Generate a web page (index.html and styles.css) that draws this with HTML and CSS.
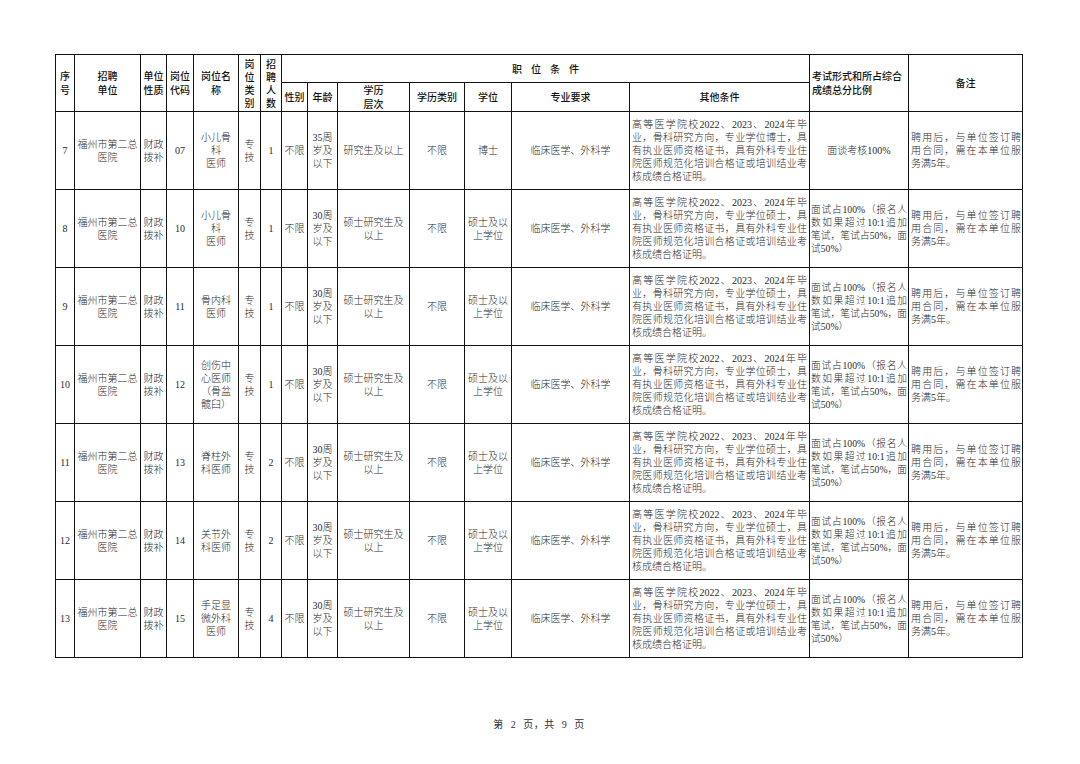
FILE: index.html
```html
<!DOCTYPE html>
<html lang="zh-CN">
<head>
<meta charset="utf-8">
<title>岗位表</title>
<link rel="stylesheet" href="styles.css">
</head>
<body>
<div class="page">
<table class="grid">
<colgroup>
<col style="width:19px"><col style="width:66px"><col style="width:26px"><col style="width:27px"><col style="width:45px"><col style="width:22px"><col style="width:21px"><col style="width:26px"><col style="width:30px"><col style="width:72px"><col style="width:55px"><col style="width:47px"><col style="width:118px"><col style="width:180px"><col style="width:99px"><col style="width:114px">
</colgroup>
<thead>
<tr class="hr1">
<th rowspan="2">序<br>号</th>
<th rowspan="2">招聘<br>单位</th>
<th rowspan="2">单位<br>性质</th>
<th rowspan="2">岗位<br>代码</th>
<th rowspan="2">岗位名<br>称</th>
<th rowspan="2" class="tight">岗<br>位<br>类<br>别</th>
<th rowspan="2" class="tight">招<br>聘<br>人<br>数</th>
<th colspan="7" class="spaced">职位条件</th>
<th rowspan="2" class="left">考试形式和所占综合<br>成绩总分比例</th>
<th rowspan="2">备注</th>
</tr>
<tr class="hr2">
<th>性别</th>
<th>年龄</th>
<th>学历<br>层次</th>
<th>学历类别</th>
<th>学位</th>
<th>专业要求</th>
<th>其他条件</th>
</tr>
</thead>
<tbody>
<tr>
<td>7</td><td>福州市第二总<br>医院</td><td>财政<br>拨补</td><td>07</td><td>小儿骨<br>科<br>医师</td><td>专<br>技</td><td>1</td><td>不限</td><td>35周<br>岁及<br>以下</td><td>研究生及以上</td><td>不限</td><td>博士</td><td>临床医学、外科学</td>
<td class="just other"><span>高等医学院校2022、2023、2024年毕</span><span>业，骨科研究方向，专业学位博士，具</span><span>有执业医师资格证书，具有外科专业住</span><span>院医师规范化培训合格证或培训结业考</span><span class="last">核成绩合格证明。</span></td>
<td>面谈考核100%</td>
<td class="just note"><span>聘用后，与单位签订聘</span><span>用合同，需在本单位服</span><span class="last">务满5年。</span></td>
</tr>
<tr>
<td>8</td><td>福州市第二总<br>医院</td><td>财政<br>拨补</td><td>10</td><td>小儿骨<br>科<br>医师</td><td>专<br>技</td><td>1</td><td>不限</td><td>30周<br>岁及<br>以下</td><td>硕士研究生及<br>以上</td><td>不限</td><td>硕士及以<br>上学位</td><td>临床医学、外科学</td>
<td class="just other"><span>高等医学院校2022、2023、2024年毕</span><span>业，骨科研究方向，专业学位硕士，具</span><span>有执业医师资格证书，具有外科专业住</span><span>院医师规范化培训合格证或培训结业考</span><span class="last">核成绩合格证明。</span></td>
<td class="just exam"><span>面试占100%（报名人</span><span>数如果超过10:1追加</span><span>笔试，笔试占50%，面</span><span class="last">试50%）</span></td>
<td class="just note"><span>聘用后，与单位签订聘</span><span>用合同，需在本单位服</span><span class="last">务满5年。</span></td>
</tr>
<tr>
<td>9</td><td>福州市第二总<br>医院</td><td>财政<br>拨补</td><td>11</td><td>骨内科<br>医师</td><td>专<br>技</td><td>1</td><td>不限</td><td>30周<br>岁及<br>以下</td><td>硕士研究生及<br>以上</td><td>不限</td><td>硕士及以<br>上学位</td><td>临床医学、外科学</td>
<td class="just other"><span>高等医学院校2022、2023、2024年毕</span><span>业，骨科研究方向，专业学位硕士，具</span><span>有执业医师资格证书，具有外科专业住</span><span>院医师规范化培训合格证或培训结业考</span><span class="last">核成绩合格证明。</span></td>
<td class="just exam"><span>面试占100%（报名人</span><span>数如果超过10:1追加</span><span>笔试，笔试占50%，面</span><span class="last">试50%）</span></td>
<td class="just note"><span>聘用后，与单位签订聘</span><span>用合同，需在本单位服</span><span class="last">务满5年。</span></td>
</tr>
<tr>
<td>10</td><td>福州市第二总<br>医院</td><td>财政<br>拨补</td><td>12</td><td>创伤中<br>心医师<br>（骨盆<br>髋臼）</td><td>专<br>技</td><td>1</td><td>不限</td><td>30周<br>岁及<br>以下</td><td>硕士研究生及<br>以上</td><td>不限</td><td>硕士及以<br>上学位</td><td>临床医学、外科学</td>
<td class="just other"><span>高等医学院校2022、2023、2024年毕</span><span>业，骨科研究方向，专业学位硕士，具</span><span>有执业医师资格证书，具有外科专业住</span><span>院医师规范化培训合格证或培训结业考</span><span class="last">核成绩合格证明。</span></td>
<td class="just exam"><span>面试占100%（报名人</span><span>数如果超过10:1追加</span><span>笔试，笔试占50%，面</span><span class="last">试50%）</span></td>
<td class="just note"><span>聘用后，与单位签订聘</span><span>用合同，需在本单位服</span><span class="last">务满5年。</span></td>
</tr>
<tr>
<td>11</td><td>福州市第二总<br>医院</td><td>财政<br>拨补</td><td>13</td><td>脊柱外<br>科医师</td><td>专<br>技</td><td>2</td><td>不限</td><td>30周<br>岁及<br>以下</td><td>硕士研究生及<br>以上</td><td>不限</td><td>硕士及以<br>上学位</td><td>临床医学、外科学</td>
<td class="just other"><span>高等医学院校2022、2023、2024年毕</span><span>业，骨科研究方向，专业学位硕士，具</span><span>有执业医师资格证书，具有外科专业住</span><span>院医师规范化培训合格证或培训结业考</span><span class="last">核成绩合格证明。</span></td>
<td class="just exam"><span>面试占100%（报名人</span><span>数如果超过10:1追加</span><span>笔试，笔试占50%，面</span><span class="last">试50%）</span></td>
<td class="just note"><span>聘用后，与单位签订聘</span><span>用合同，需在本单位服</span><span class="last">务满5年。</span></td>
</tr>
<tr>
<td>12</td><td>福州市第二总<br>医院</td><td>财政<br>拨补</td><td>14</td><td>关节外<br>科医师</td><td>专<br>技</td><td>2</td><td>不限</td><td>30周<br>岁及<br>以下</td><td>硕士研究生及<br>以上</td><td>不限</td><td>硕士及以<br>上学位</td><td>临床医学、外科学</td>
<td class="just other"><span>高等医学院校2022、2023、2024年毕</span><span>业，骨科研究方向，专业学位硕士，具</span><span>有执业医师资格证书，具有外科专业住</span><span>院医师规范化培训合格证或培训结业考</span><span class="last">核成绩合格证明。</span></td>
<td class="just exam"><span>面试占100%（报名人</span><span>数如果超过10:1追加</span><span>笔试，笔试占50%，面</span><span class="last">试50%）</span></td>
<td class="just note"><span>聘用后，与单位签订聘</span><span>用合同，需在本单位服</span><span class="last">务满5年。</span></td>
</tr>
<tr>
<td>13</td><td>福州市第二总<br>医院</td><td>财政<br>拨补</td><td>15</td><td>手足显<br>微外科<br>医师</td><td>专<br>技</td><td>4</td><td>不限</td><td>30周<br>岁及<br>以下</td><td>硕士研究生及<br>以上</td><td>不限</td><td>硕士及以<br>上学位</td><td>临床医学、外科学</td>
<td class="just other"><span>高等医学院校2022、2023、2024年毕</span><span>业，骨科研究方向，专业学位硕士，具</span><span>有执业医师资格证书，具有外科专业住</span><span>院医师规范化培训合格证或培训结业考</span><span class="last">核成绩合格证明。</span></td>
<td class="just exam"><span>面试占100%（报名人</span><span>数如果超过10:1追加</span><span>笔试，笔试占50%，面</span><span class="last">试50%）</span></td>
<td class="just note"><span>聘用后，与单位签订聘</span><span>用合同，需在本单位服</span><span class="last">务满5年。</span></td>
</tr>
</tbody>
</table>
<div class="footer">第 2 页，共 9 页</div>
</div>
</body>
</html>
```

FILE: styles.css
```css
html, body {
  margin: 0;
  padding: 0;
  background: #fff;
}
.page {
  width: 1080px;
  height: 764px;
  box-sizing: border-box;
  padding: 54px 0 0 55px;
  font-family: "Liberation Serif", "Noto Sans CJK SC", serif;
  color: #2a2a2a;
}
.grid {
  border-collapse: collapse;
  table-layout: fixed;
  width: 968px;
}
.grid th,
.grid td {
  border: 1px solid #111;
  padding: 0;
  text-align: center;
  vertical-align: middle;
  font-size: 10px;
  line-height: 13px;
  overflow: visible;
}
.grid th {
  font-family: "Noto Sans CJK SC", "Liberation Sans", sans-serif;
  font-weight: 500;
  color: #111;
  line-height: 14px;
}
.grid th.tight {
  line-height: 13px;
}
.grid th.left {
  text-align: left;
  padding-left: 2px;
}
.grid th.spaced {
  letter-spacing: 9px;
  text-indent: 9px;
}
.hr1 th {
  height: 27px;
}
.hr2 th {
  height: 27px;
}
.grid tbody td {
  height: 77px;
  font-weight: 300;
}
.grid td.just {
  text-align: justify;
}
.grid td.just span {
  display: block;
  white-space: nowrap;
  text-align: justify;
  text-align-last: justify;
}
.grid td.just span.last {
  text-align-last: left;
}
.grid td.other {
  padding: 0 2px;
}
.grid td.exam {
  padding: 0 1px;
  font-size: 9.7px;
}
.grid td.note {
  padding: 0 1px 0 2px;
}
.footer {
  width: 968px;
  margin-top: 60px;
  text-align: center;
  font-size: 10px;
  line-height: 13px;
  word-spacing: 4px;
  letter-spacing: 0.5px;
  color: #333;
}
```
